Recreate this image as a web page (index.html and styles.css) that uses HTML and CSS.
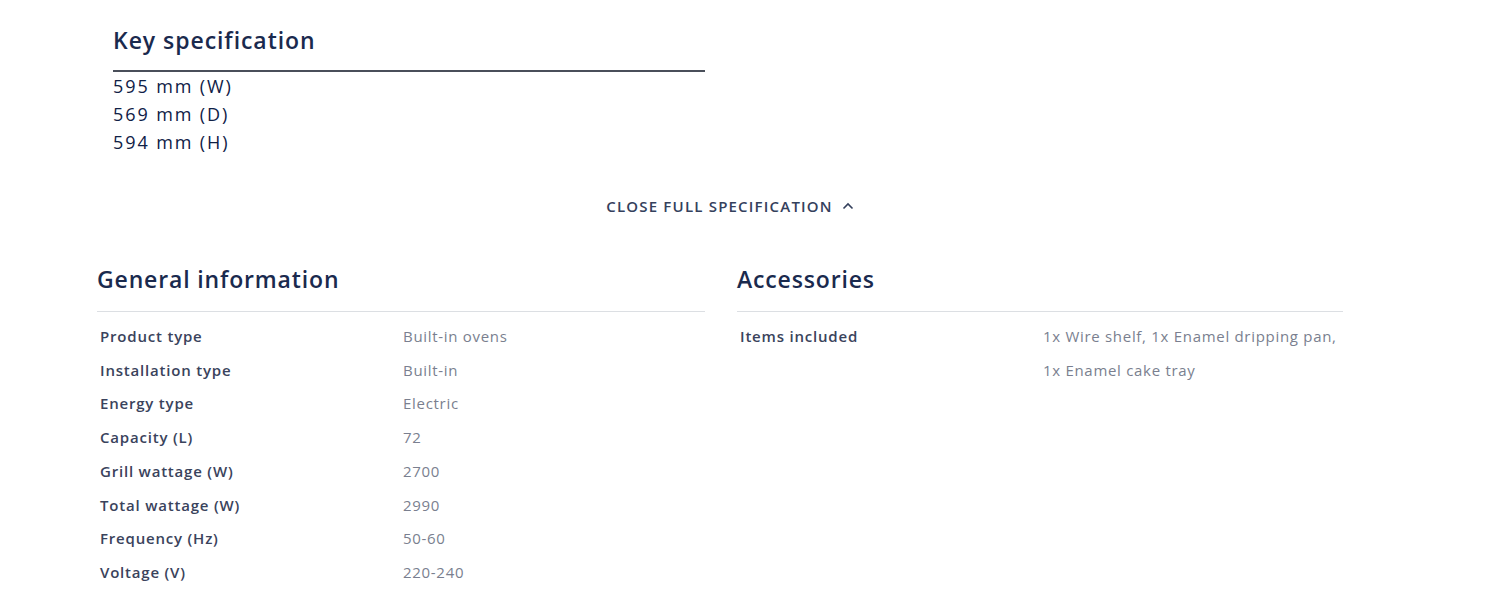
FILE: index.html
```html
<!DOCTYPE html>
<html>
<head>
<meta charset="utf-8">
<link rel="stylesheet" href="styles.css">
</head>
<body>
<div class="page">
  <section class="key">
    <h2 class="key-title">Key specification</h2>
    <ul class="key-list">
      <li>595 mm (W)</li>
      <li>569 mm (D)</li>
      <li>594 mm (H)</li>
    </ul>
  </section>
  <div class="toggle-row">
    <button class="toggle">CLOSE FULL SPECIFICATION
      <svg class="chev" width="12" height="8" viewBox="0 0 12 8"><path d="M1.5 6.5 L6 2 L10.5 6.5" fill="none" stroke="currentColor" stroke-width="1.6"/></svg>
    </button>
  </div>
  <div class="groups">
    <section class="group">
      <h3 class="group-title">General information</h3>
      <dl class="rows">
        <div class="row"><dt>Product type</dt><dd>Built-in ovens</dd></div>
        <div class="row"><dt>Installation type</dt><dd>Built-in</dd></div>
        <div class="row"><dt>Energy type</dt><dd>Electric</dd></div>
        <div class="row"><dt>Capacity (L)</dt><dd>72</dd></div>
        <div class="row"><dt>Grill wattage (W)</dt><dd>2700</dd></div>
        <div class="row"><dt>Total wattage (W)</dt><dd>2990</dd></div>
        <div class="row"><dt>Frequency (Hz)</dt><dd>50-60</dd></div>
        <div class="row"><dt>Voltage (V)</dt><dd>220-240</dd></div>
      </dl>
    </section>
    <section class="group">
      <h3 class="group-title">Accessories</h3>
      <dl class="rows">
        <div class="row"><dt>Items included</dt><dd>1x Wire shelf, 1x Enamel dripping pan,<br>1x Enamel cake tray</dd></div>
      </dl>
    </section>
  </div>
</div>
</body>
</html>
```

FILE: styles.css
```css
* { box-sizing: border-box; }
body {
  margin: 0;
  background: #fff;
  font-family: "Open Sans", Lato, "Noto Sans", sans-serif;
  color: #041e50;
}
.page {
  padding: 22px 0 0 97px;
  width: 1343px;
}
.key {
  margin-left: 16px;
  width: 592px;
}
.key-title {
  margin: 0;
  font-size: 23px;
  font-weight: 600;
  letter-spacing: 0.95px;
  line-height: 36px;
  padding-bottom: 12px;
  border-bottom: 2px solid #4a4f5a;
  color: #1a2a4e;
}
.key-list {
  list-style: none;
  margin: 0;
  padding: 0;
  font-size: 18px;
  font-weight: 400;
  letter-spacing: 1.9px;
  line-height: 28px;
  color: #0f2046;
}
.toggle-row {
  display: flex;
  justify-content: center;
  margin-top: 40px;
  padding-left: 20px;
}
.toggle {
  border: 0;
  background: none;
  padding: 0;
  font-family: inherit;
  font-size: 15px;
  font-weight: 600;
  letter-spacing: 1.2px;
  color: #34405c;
  display: flex;
  align-items: center;
  gap: 9px;
  line-height: 20px;
}
.chev { color: #34405c; }
.groups {
  display: grid;
  grid-template-columns: 608px 606px;
  column-gap: 32px;
  margin-top: 47px;
}
.group-title {
  margin: 0;
  font-size: 23px;
  font-weight: 600;
  letter-spacing: 0.85px;
  line-height: 32px;
  padding-bottom: 16px;
  border-bottom: 1px solid #dcdfe3;
  color: #1a2a4e;
}
.rows {
  margin: 8px 0 0 0;
  padding: 0 0 0 3px;
}
.row {
  display: grid;
  grid-template-columns: 303px 1fr;
}
.row dt {
  font-size: 15px;
  font-weight: 600;
  letter-spacing: 0.8px;
  color: #3a435c;
  line-height: 33.7px;
}
.row dd {
  margin: 0;
  font-size: 15px;
  letter-spacing: 0.7px;
  color: #7a7f8f;
  line-height: 33.7px;
}
```
